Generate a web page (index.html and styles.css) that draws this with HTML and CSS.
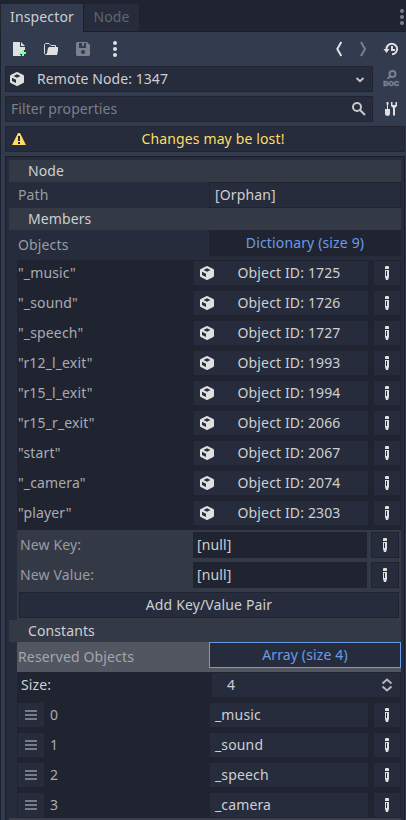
FILE: index.html
```
<!DOCTYPE html>
<html lang="en">
<head>
<meta charset="utf-8">
<title>Inspector</title>
<link rel="stylesheet" href="styles.css">
</head>
<body>
<svg class="defs" width="0" height="0">
  <symbol id="cube" viewBox="0 0 16 16"><path fill="#e0e0e0" fill-rule="evenodd" d="M8 1q-.4 0-.8.2l-5.500 2.700Q1 4.300 1 5v6q0 .7.700 1.100l5.500 2.700q.8.400 1.600 0l5.500-2.700q.7-.4.700-1.100V5q0-.7-.7-1.100L8.800 1.200Q8.400 1 8 1zM8 3.300 11.400 5 8 6.700 4.600 5zM3 6.800l4 2v3.200l-4-2z"/></symbol>
  <symbol id="pencil" viewBox="0 0 16 16"><path fill="#e0e0e0" fill-rule="evenodd" d="M7 1h2a1 1 0 0 1 1 1v2H6V2a1 1 0 0 1 1-1zM6 5h4v7l-1 3H7l-1-3zm1 1v5h1V6z"/></symbol>
  <symbol id="dots" viewBox="0 0 16 16"><g fill="currentColor"><circle cx="8" cy="2" r="2"/><circle cx="8" cy="8" r="2"/><circle cx="8" cy="14" r="2"/></g></symbol>
  <symbol id="grip" viewBox="0 0 16 16"><path fill="#787c88" d="M2 3h12v2H2zM2 7h12v2H2zM2 11h12v2H2z"/></symbol>
</svg>
<div class="dock">
  <nav class="tabs">
    <div class="tab active">Inspector</div>
    <div class="tab">Node</div>
    <svg class="tabmenu" width="16" height="16"><use href="#dots"/></svg>
  </nav>
  <main class="panel">
    <div class="toolbar">
      <svg width="16" height="16" viewBox="0 0 16 16"><path fill="#e0e0e0" d="M2 1h7v5h5v3h-3v2H9v3h1v1H2zM10 1l4 4h-4z"/><path fill="#84ffb1" d="M11 9h2v2h2v2h-2v2h-2v-2H9v-2h2z"/></svg>
      <svg width="16" height="16" viewBox="0 0 16 16"><path fill="none" stroke="#e0e0e0" d="M3.500 13.500h-1l-1-1V3.500l1-1H6l2 2h4.500V6"/><path fill="#e0e0e0" d="M6 6h9v4l-1 4H3l1-2 1-5z"/></svg>
      <svg width="16" height="16" viewBox="0 0 16 16"><path fill="#7b808c" fill-rule="evenodd" d="M2 1h10l3 3v10l-1 1H2l-1-1V2zM4 2v5h7V2H9v3H7V2zM8 9a2 2 0 1 0 .01 0z"/></svg>
      <svg class="bright" width="16" height="16"><use href="#dots"/></svg>
      <span class="spacer"></span>
      <svg width="16" height="16" viewBox="0 0 16 16"><path fill="none" stroke="#e0e0e0" stroke-width="2" d="m10.300 1-4 7 4 7"/></svg>
      <svg width="16" height="16" viewBox="0 0 16 16"><path fill="none" stroke="#7b808c" stroke-width="2" d="m6 1 4 7-4 7"/></svg>
      <svg class="history" width="16" height="16" viewBox="0 0 16 16"><path fill="none" stroke="#e0e0e0" stroke-width="2" d="M3.500 9V8A5.300 5.300 0 1 1 9 13.300"/><path fill="#e0e0e0" d="M.5 8h6l-3 4zM8 5h2v3h2v2H8z"/></svg>
    </div>
    <div class="line">
      <div class="box select"><svg width="16" height="16"><use href="#cube"/></svg><span>Remote Node: 1347</span><svg width="16" height="16" viewBox="0 0 16 16"><path fill="none" stroke="#c2c4c8" stroke-width="2" d="m4.500 7 3.500 3.200L11.500 7"/></svg></div>
      <div class="docs"><svg width="16" height="9" viewBox="0 0 16 9"><g fill="none" stroke="#7b808c" stroke-width="2"><circle cx="9.500" cy="4" r="3"/><path d="M7.500 6 4.500 9"/></g></svg><span>DOC</span></div>
    </div>
    <div class="line">
      <div class="box filter"><span>Filter properties</span><svg width="16" height="16" viewBox="0 0 16 16"><g fill="none" stroke="#c6c8cb" stroke-width="2"><circle cx="6" cy="6" r="4"/><path d="m9 9 5 5"/></g></svg></div>
      <svg width="16" height="16" viewBox="0 0 16 16"><path fill="#e0e0e0" d="M3.500 1h2v2L5 4v4h2v5q-.5 2-2.500 2T2 13V8h2V4l-.5-1zM8 1h1.500v3h3V1H14v4l-2 2v7l-1 1-1-1V7L8 5z"/></svg>
    </div>
    <div class="box warning"><svg width="16" height="16" viewBox="0 0 16 16"><path fill="#ffdd65" fill-rule="evenodd" d="M7 2h2l6 12H1zM7 5v5h2V5zm0 6v2h2v-2z"/></svg><span>Changes may be lost!</span></div>
    <section class="tree">
      <h2>Node</h2>
      <div class="prop"><span>Path</span><div class="box path">[Orphan]</div></div>
      <h2>Members</h2>
      <div class="prop objects"><span>Objects</span><div class="value dictionary">Dictionary (size 9)</div></div>
      <div class="entries">
        <div class="entry"><span>"_music"</span><div class="object"><svg width="16" height="16"><use href="#cube"/></svg><b>Object ID: 1725</b></div><div class="edit"><svg width="16" height="16"><use href="#pencil"/></svg></div></div>
        <div class="entry"><span>"_sound"</span><div class="object"><svg width="16" height="16"><use href="#cube"/></svg><b>Object ID: 1726</b></div><div class="edit"><svg width="16" height="16"><use href="#pencil"/></svg></div></div>
        <div class="entry"><span>"_speech"</span><div class="object"><svg width="16" height="16"><use href="#cube"/></svg><b>Object ID: 1727</b></div><div class="edit"><svg width="16" height="16"><use href="#pencil"/></svg></div></div>
        <div class="entry"><span>"r12_l_exit"</span><div class="object"><svg width="16" height="16"><use href="#cube"/></svg><b>Object ID: 1993</b></div><div class="edit"><svg width="16" height="16"><use href="#pencil"/></svg></div></div>
        <div class="entry"><span>"r15_l_exit"</span><div class="object"><svg width="16" height="16"><use href="#cube"/></svg><b>Object ID: 1994</b></div><div class="edit"><svg width="16" height="16"><use href="#pencil"/></svg></div></div>
        <div class="entry"><span>"r15_r_exit"</span><div class="object"><svg width="16" height="16"><use href="#cube"/></svg><b>Object ID: 2066</b></div><div class="edit"><svg width="16" height="16"><use href="#pencil"/></svg></div></div>
        <div class="entry"><span>"start"</span><div class="object"><svg width="16" height="16"><use href="#cube"/></svg><b>Object ID: 2067</b></div><div class="edit"><svg width="16" height="16"><use href="#pencil"/></svg></div></div>
        <div class="entry"><span>"_camera"</span><div class="object"><svg width="16" height="16"><use href="#cube"/></svg><b>Object ID: 2074</b></div><div class="edit"><svg width="16" height="16"><use href="#pencil"/></svg></div></div>
        <div class="entry"><span>"player"</span><div class="object"><svg width="16" height="16"><use href="#cube"/></svg><b>Object ID: 2303</b></div><div class="edit"><svg width="16" height="16"><use href="#pencil"/></svg></div></div>
      </div>
      <div class="create">
        <div class="new"><span>New Key:</span><div class="box null">[null]</div><div class="box pen"><svg width="16" height="16"><use href="#pencil"/></svg></div></div>
        <div class="new"><span>New Value:</span><div class="box null">[null]</div><div class="box pen"><svg width="16" height="16"><use href="#pencil"/></svg></div></div>
        <div class="box add">Add Key/Value Pair</div>
      </div>
      <h2>Constants</h2>
      <div class="prop reserved"><span>Reserved Objects</span><div class="value array">Array (size 4)</div></div>
      <div class="items">
        <div class="size"><span>Size:</span><div class="spin"><span>4</span><svg width="16" height="16" viewBox="0 0 16 16"><path fill="none" stroke="#b5b7bb" stroke-width="2" d="m3.500 6.500 4.500-4 4.500 4M3.500 9.500l4.500 4 4.500-4"/></svg></div></div>
        <div class="item"><div class="edit"><svg width="16" height="16"><use href="#grip"/></svg></div><span>0</span><div class="text">_music</div><div class="edit"><svg width="16" height="16"><use href="#pencil"/></svg></div></div>
        <div class="item"><div class="edit"><svg width="16" height="16"><use href="#grip"/></svg></div><span>1</span><div class="text">_sound</div><div class="edit"><svg width="16" height="16"><use href="#pencil"/></svg></div></div>
        <div class="item"><div class="edit"><svg width="16" height="16"><use href="#grip"/></svg></div><span>2</span><div class="text">_speech</div><div class="edit"><svg width="16" height="16"><use href="#pencil"/></svg></div></div>
        <div class="item"><div class="edit"><svg width="16" height="16"><use href="#grip"/></svg></div><span>3</span><div class="text">_camera</div><div class="edit"><svg width="16" height="16"><use href="#pencil"/></svg></div></div>
      </div>
      <div class="next"></div>
    </section>
  </main>
</div>
</body>
</html>
```
FILE: styles.css
```
* { box-sizing: border-box; }
body { margin: 0; background: #202531; color: #cdcfd2; font: 14px/24px "Noto Sans", sans-serif; letter-spacing: .14px; white-space: nowrap; overflow: hidden; }
svg { flex: none; display: block; }
.defs { position: absolute; }
.docs { width: 16px; height: 18px; color: #7b808c; }
.docs span { display: block; text-align: center; font: 900 8px/9px Roboto, sans-serif; letter-spacing: -.1px; -webkit-text-stroke: .4px #7b808c; }
.dock { width: 406px; height: 820px; overflow: hidden; }
.tabs { height: 32px; padding: 4px 0 0 1px; display: flex; background: #202430; border-bottom: 1px solid #191e2a; }
.tab { width: 55px; height: 27px; line-height: 26px; text-align: center; background: #262c3b; color: #5f6573; }
.tab.active { width: 83px; height: 28px; background: #333b4f; color: #cdcfd2; border-right: 1px solid #191e2a; }
.tabmenu { margin: 5px -4px 0 auto; color: #7b7e86; }
.panel { height: 788px; margin-left: 1px; padding: 0 1px 0 4px; background: #333b4f; box-shadow: -1px 0 #1c212e; }
.toolbar { height: 34px; display: flex; align-items: center; gap: 16px; padding: 0 6px; }
.toolbar .spacer { flex: 1; }
.toolbar .spacer + svg { margin-right: -8px; }
.toolbar .history { margin-left: -4px; }
.bright { color: #e0e0e0; }
.line { display: flex; align-items: center; height: 26px; margin-bottom: 4px; gap: 10px; }
.box { height: 26px; background: #262c3b; border: 1px solid #1f2430; }
.select, .filter { width: 368px; display: flex; align-items: center; padding: 0 4px 0 3px; }
.select span { flex: 1; margin-left: 12px; letter-spacing: .07px; }
.filter { padding: 0 5px; color: #7a7f8a; }
.filter span { flex: 1; letter-spacing: .07px; }
.warning { width: 400px; display: flex; align-items: center; padding: 0 5px; color: #ffdd65; }
.warning span { flex: 1; text-align: center; }
.tree { width: 400px; height: 664px; margin-top: 4px; padding: 3px; background: #262c3b; border: solid #191e2a; border-width: 1px 1px 0; }
h2 { width: 392px; height: 22px; margin: 0; padding-left: 19px; background: #343946; font: 14px/22px "Noto Sans", sans-serif; letter-spacing: .1px; }
.prop { width: 384px; margin-left: 8px; display: flex; color: #999ca2; line-height: 26px; }
.prop > span { width: 192px; padding-left: 1px; }
.path { width: 192px; padding-left: 5px; color: #cdcfd2; line-height: 23px; }
.value { width: 192px; height: 26px; text-align: center; color: #699ce8; line-height: 25px; }
.objects { height: 30px; }
.objects > span, .reserved > span { line-height: 30px; }
.dictionary { background: #202430; }
.entries { width: 384px; height: 270px; margin-left: 8px; padding: 1px 1px 0; background: #202430; }
.entry { height: 24px; margin-bottom: 6px; display: flex; color: #a9abb0; }
.entry > span { width: 176px; }
.object { width: 174px; display: flex; align-items: center; padding: 0 5px; background: #262c3b; color: #cdcfd2; }
.object b { flex: 1; font-weight: 400; text-align: center; }
.edit { width: 26px; height: 24px; margin-left: 6px; padding: 4px 5px; background: #262c3b; }
.create { width: 384px; height: 90px; margin-left: 8px; padding: 2px; background: #343946; }
.new { height: 26px; margin-bottom: 4px; display: flex; color: #999ca2; line-height: 26px; }
.new > span { width: 174px; padding-left: 1px; }
.null { width: 174px; padding-left: 3px; background: #202430; color: #cdcfd2; line-height: 23px; }
.pen { width: 28px; margin-left: 4px; padding: 4px 5px; }
.add { width: 380px; text-align: center; line-height: 23px; }
.reserved { height: 30px; background: #525660; color: #a4a6ab; }
.array { background: #262c3b; border: 1px solid #699ce8; line-height: 23px; }
.items { width: 384px; height: 146px; margin-left: 8px; padding: 1px; background: #202430; }
.size, .item { height: 24px; margin-bottom: 6px; display: flex; }
.size > span { width: 194px; padding-left: 3px; }
.spin { width: 188px; padding: 0 5px 0 15px; display: flex; align-items: center; justify-content: space-between; background: #262c3b; }
.item > .edit:first-child { margin-left: 0; }
.item > span { width: 166px; padding-left: 6px; color: #a9abb0; }
.text { width: 158px; padding-left: 5px; background: #262c3b; }
.next { width: 392px; height: 2px; background: #3b3f4c; }
```
